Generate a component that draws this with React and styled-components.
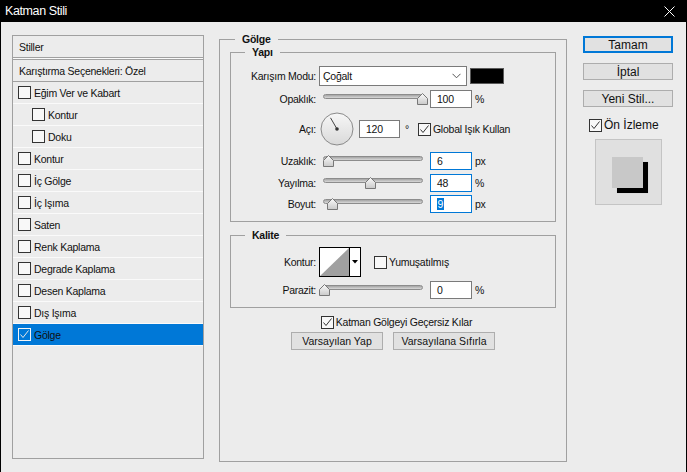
import React from 'react';
import styled, { createGlobalStyle } from 'styled-components';

const GlobalStyle = createGlobalStyle`
  html, body {
    margin: 0;
    padding: 0;
    background: #ececec;
    overflow: hidden;
  }
  body {
    font-family: "Liberation Sans", Arial, sans-serif;
    font-size: 10.5px;
    letter-spacing: -0.25px;
    color: #111;
  }
`;

const Window = styled.div`
  width: 687px;
  height: 472px;
  box-sizing: border-box;
  border-left: 1px solid #000;
  border-right: 1px solid #000;
  background: #ececec;
  display: flex;
  flex-direction: column;
  overflow: hidden;
`;

const TitleBar = styled.div`
  height: 22px;
  flex-shrink: 0;
  background: #000;
  color: #fff;
  display: flex;
  align-items: center;
  justify-content: space-between;
  padding: 0 11px 0 4px;
  font-size: 12.5px;
  letter-spacing: -0.4px;
`;

const Body = styled.div`
  display: flex;
  align-items: flex-start;
  padding: 13px 0 0 11px;
`;

// ---- left list
const LeftPanel = styled.div`
  width: 192px;
  height: 424px;
  box-sizing: border-box;
  border: 1px solid #a0a0a0;
  display: flex;
  flex-direction: column;
`;

const PanelHeader = styled.div`
  height: 21px;
  display: flex;
  align-items: center;
  padding-left: 6px;
  border-bottom: 1px solid #a0a0a0;
  ${p => p.$second && `
    margin-top: 1px;
    border-top: 1px solid #a0a0a0;
    box-shadow: 0 -1px 0 #fafafa;
  `}
`;

const StyleItem = styled.div`
  height: 21px;
  border-bottom: 1px solid #fafafa;
  display: flex;
  align-items: center;
  gap: 3px;
  padding-left: ${p => (p.$indent ? 19 : 5)}px;
  background: ${p => (p.$active ? '#0078d7' : 'transparent')};
`;

const Box = styled.span`
  width: 13px;
  height: 13px;
  box-sizing: border-box;
  flex-shrink: 0;
  border: 1px solid ${p => (p.$light ? '#f4f4f4' : '#333')};
  background: ${p => (p.$light ? 'transparent' : '#f8f8f8')};
  display: inline-flex;
  align-items: center;
  justify-content: center;
`;

const Check = ({ checked, light }) => (
  <Box $light={light}>
    {checked && (
      <svg width="11" height="11" viewBox="0 0 11 11">
        <polyline points="1.5,5.5 4,8.5 9.5,1.5" fill="none" stroke={light ? '#e6e6e6' : '#333'} strokeWidth="1" />
      </svg>
    )}
  </Box>
);

// ---- group boxes
const Group = styled.div`
  position: relative;
  box-sizing: border-box;
  border: 1px solid #a0a0a0;
`;

const OuterGroup = styled(Group)`
  width: 348px;
  height: 423px;
  margin: 4px 0 0 15px;
  padding: 12px 10px 0;
`;

const InnerGroup = styled(Group)`
  margin-top: ${p => p.$top || 0}px;
  padding: ${p => p.$pad};
`;

const Legend = styled.span`
  position: absolute;
  top: -7px;
  left: ${p => p.$left}px;
  padding: 0 7px;
  line-height: 13px;
  background: #ececec;
  font-weight: bold;
`;

const FormRow = styled.div`
  display: flex;
  align-items: center;
  height: ${p => p.$h}px;
`;

const Label = styled.span`
  width: 85px;
  flex-shrink: 0;
  text-align: right;
  margin-right: ${p => p.$mr}px;
`;

const Select = styled.div`
  width: 148px;
  height: 20px;
  box-sizing: border-box;
  border: 1px solid #7a7a7a;
  background: #fff;
  display: flex;
  align-items: center;
  justify-content: space-between;
  padding: 0 5px 0 3px;
`;

const Swatch = styled.div`
  width: 34px;
  height: 16px;
  box-sizing: border-box;
  margin-left: 3px;
  background: #000;
  border: 1px solid #5a5a5a;
`;

const SliderWrap = styled.div`
  position: relative;
  width: 100px;
  height: 14px;
  margin-right: 7px;
  flex-shrink: 0;
`;

const Track = styled.div`
  margin-top: 2px;
  height: 5px;
  box-sizing: border-box;
  border-radius: 3px;
  border: 1px solid #8c8c8c;
  background: linear-gradient(#a4a4a4, #d8d8d8);
`;

const Thumb = styled.svg`
  position: absolute;
  top: 1px;
`;

const Slider = ({ frac }) => (
  <SliderWrap>
    <Track />
    <Thumb width="11" height="12" viewBox="0 0 11 12" style={{ left: frac * 99 - 5.5 }}>
      <defs>
        <linearGradient id="tg" x1="0" y1="0" x2="0" y2="1">
          <stop offset="0" stopColor="#fbfbfb" />
          <stop offset="1" stopColor="#c9c9c9" />
        </linearGradient>
      </defs>
      <path d="M0.5 11.5 V5.5 L5.5 0.5 L10.5 5.5 V11.5 Z" fill="url(#tg)" stroke="#777" strokeWidth="1" />
    </Thumb>
  </SliderWrap>
);

const NumField = styled.div`
  width: ${p => p.$w || 42}px;
  height: 18px;
  box-sizing: border-box;
  flex-shrink: 0;
  border: 1px solid ${p => (p.$focus ? '#0078d7' : '#7a7a7a')};
  background: #fff;
  padding-left: 6px;
  display: flex;
  align-items: center;
`;

const Selected = styled.span`
  background: #0078d7;
  color: #fff;
  padding: 0 0.5px;
`;

const Unit = styled.span`
  margin-left: ${p => p.$ml || 3}px;
`;

const Inline = styled.label`
  display: flex;
  align-items: center;
  gap: 2px;
  margin-left: ${p => p.$ml || 0}px;
`;

const Picker = styled.div`
  width: 42px;
  height: 30px;
  box-sizing: border-box;
  border: 1px solid #000;
  background: #fff;
  display: flex;
  flex-shrink: 0;
`;

const PickerArrow = styled.div`
  flex: 1;
  border-left: 1px solid #000;
  display: flex;
  align-items: center;
  justify-content: center;
`;

const CenterRow = styled.div`
  display: flex;
  justify-content: center;
  align-items: center;
  gap: 10px;
  height: 18px;
  margin-top: ${p => p.$top}px;
  padding-left: ${p => p.$shift || 0}px;
`;

const SmallButton = styled.button`
  width: ${p => p.$w}px;
  height: 18px;
  box-sizing: border-box;
  border: 1px solid #adadad;
  background: #e1e1e1;
  font: inherit;
  color: inherit;
  padding: 0;
`;

// ---- right column
const RightCol = styled.div`
  width: 90px;
  margin: 1px 0 0 16px;
  display: flex;
  flex-direction: column;
  font-size: 12px;
  letter-spacing: 0;
`;

const DialogButton = styled.button`
  height: 17px;
  box-sizing: border-box;
  margin-bottom: ${p => (p.$last ? 0 : 10)}px;
  border: ${p => (p.$primary ? '2px solid #0078d7' : '1px solid #adadad')};
  background: #e1e1e1;
  font: inherit;
  color: #111;
  padding: 0;
  line-height: 1;
`;

const PreviewToggle = styled.label`
  display: flex;
  align-items: center;
  gap: 2px;
  height: 14px;
  margin-top: 11px;
  padding-left: 6px;
`;

const PreviewBox = styled.div`
  width: 67px;
  height: 66px;
  box-sizing: border-box;
  margin: 7px 0 0 12px;
  border: 1px solid #c4c4c4;
  background: #e0e0e0;
  padding: 17px 0 0 16px;
`;

const PreviewSquare = styled.div`
  width: 31px;
  height: 31px;
  background: #c8c8c8;
  box-shadow: 5px 5px 0.5px #000;
`;

const Dial = () => (
  <svg width="34" height="34" viewBox="0 0 34 34" style={{ flexShrink: 0 }}>
    <defs>
      <linearGradient id="dg" x1="0" y1="0" x2="0" y2="1">
        <stop offset="0" stopColor="#f7f7f7" />
        <stop offset="1" stopColor="#d9d9d9" />
      </linearGradient>
    </defs>
    <circle cx="17" cy="17" r="16" fill="url(#dg)" stroke="#8a8a8a" strokeWidth="1" />
    <line x1="17" y1="17" x2="10.5" y2="5.8" stroke="#444" strokeWidth="1" />
    <circle cx="17" cy="17" r="1.8" fill="#333" />
  </svg>
);

const styleItems = [
  { name: 'Eğim Ver ve Kabart' },
  { name: 'Kontur', indent: true },
  { name: 'Doku', indent: true },
  { name: 'Kontur' },
  { name: 'İç Gölge' },
  { name: 'İç Işıma' },
  { name: 'Saten' },
  { name: 'Renk Kaplama' },
  { name: 'Degrade Kaplama' },
  { name: 'Desen Kaplama' },
  { name: 'Dış Işıma' },
  { name: 'Gölge', active: true },
];

export default function App() {
  return (
    <>
      <GlobalStyle />
      <Window>
        <TitleBar>
          <span>Katman Stili</span>
          <svg width="11" height="11" viewBox="0 0 11 11">
            <path d="M0.5 0.5 L10.5 10.5 M10.5 0.5 L0.5 10.5" stroke="#fff" strokeWidth="1" />
          </svg>
        </TitleBar>
        <Body>
          <LeftPanel>
            <PanelHeader>Stiller</PanelHeader>
            <PanelHeader $second>Karıştırma Seçenekleri: Özel</PanelHeader>
            {styleItems.map((it, i) => (
              <StyleItem key={i} $indent={it.indent} $active={it.active}>
                <Check checked={it.active} light={it.active} />
                <span>{it.name}</span>
              </StyleItem>
            ))}
          </LeftPanel>

          <OuterGroup>
            <Legend $left={15}>Gölge</Legend>

            <InnerGroup $pad="12px 0 6px">
              <Legend $left={14}>Yapı</Legend>
              <FormRow $h={22}>
                <Label $mr={3}>Karışım Modu:</Label>
                <Select>
                  <span>Çoğalt</span>
                  <svg width="9" height="6" viewBox="0 0 9 6">
                    <polyline points="0.5,0.8 4.5,4.8 8.5,0.8" fill="none" stroke="#555" strokeWidth="1" />
                  </svg>
                </Select>
                <Swatch />
              </FormRow>
              <FormRow $h={23}>
                <Label $mr={7}>Opaklık:</Label>
                <Slider frac={1} />
                <NumField>100</NumField>
                <Unit>%</Unit>
              </FormRow>
              <FormRow $h={38}>
                <Label $mr={4}>Açı:</Label>
                <Dial />
                <NumField $w={41} style={{ marginLeft: 5 }}>120</NumField>
                <Unit $ml={5}>°</Unit>
                <Inline $ml={9}>
                  <Check checked />
                  <span>Global Işık Kullan</span>
                </Inline>
              </FormRow>
              <FormRow $h={25}>
                <Label $mr={7}>Uzaklık:</Label>
                <Slider frac={0.06} />
                <NumField $focus>6</NumField>
                <Unit>px</Unit>
              </FormRow>
              <FormRow $h={20}>
                <Label $mr={7}>Yayılma:</Label>
                <Slider frac={0.48} />
                <NumField $focus>48</NumField>
                <Unit>%</Unit>
              </FormRow>
              <FormRow $h={22}>
                <Label $mr={7}>Boyut:</Label>
                <Slider frac={0.1} />
                <NumField $focus><Selected>9</Selected></NumField>
                <Unit>px</Unit>
              </FormRow>
            </InnerGroup>

            <InnerGroup $top={13} $pad="11px 0 5px">
              <Legend $left={14}>Kalite</Legend>
              <FormRow $h={30}>
                <Label $mr={3}>Kontur:</Label>
                <Picker>
                  <svg width="29" height="28" viewBox="0 0 29 28">
                    <polygon points="0,28 29,0 29,28" fill="#a0a0a0" />
                  </svg>
                  <PickerArrow>
                    <svg width="6" height="4" viewBox="0 0 6 4">
                      <polygon points="0,0 6,0 3,3.5" fill="#000" />
                    </svg>
                  </PickerArrow>
                </Picker>
                <Inline $ml={13}>
                  <Check />
                  <span>Yumuşatılmış</span>
                </Inline>
              </FormRow>
              <FormRow $h={25}>
                <Label $mr={7}>Parazit:</Label>
                <Slider frac={0.01} />
                <NumField>0</NumField>
                <Unit>%</Unit>
              </FormRow>
            </InnerGroup>

            <CenterRow $top={5} $shift={7}>
              <Inline>
                <Check checked />
                <span>Katman Gölgeyi Geçersiz Kılar</span>
              </Inline>
            </CenterRow>
            <CenterRow $top={1}>
              <SmallButton $w={92}>Varsayılan Yap</SmallButton>
              <SmallButton $w={102}>Varsayılana Sıfırla</SmallButton>
            </CenterRow>
          </OuterGroup>

          <RightCol>
            <DialogButton $primary>Tamam</DialogButton>
            <DialogButton>İptal</DialogButton>
            <DialogButton $last>Yeni Stil...</DialogButton>
            <PreviewToggle>
              <Check checked />
              <span>Ön İzleme</span>
            </PreviewToggle>
            <PreviewBox>
              <PreviewSquare />
            </PreviewBox>
          </RightCol>
        </Body>
      </Window>
    </>
  );
}
